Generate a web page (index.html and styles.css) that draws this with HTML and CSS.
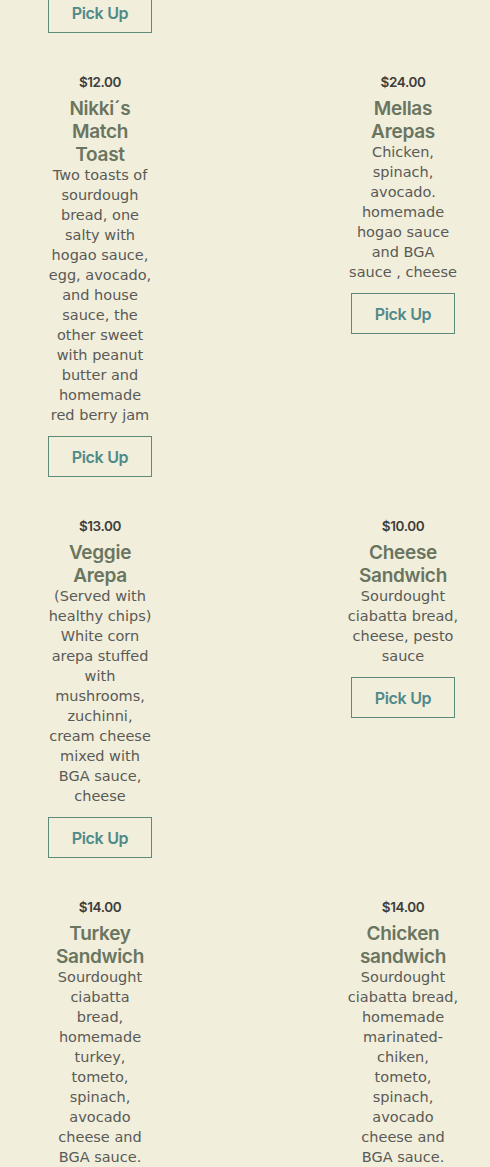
FILE: index.html
```html
<!doctype html>
<html lang="en">

<head>
  <meta charset="utf-8">
  <meta name="viewport" content="width=device-width, initial-scale=1">
  <link rel="stylesheet" href="styles.css">
  <title>Menu</title>
</head>

<body>
  <div class="menu">
    <div class="item item-tail">
      <button class="pickup">Pick Up</button>
    </div>
    <div class="item"></div>

    <div class="item">
      <div class="price">$12.00</div>
      <div class="name">Nikki´s Match Toast</div>
      <div class="desc">Two toasts of sourdough bread, one salty with hogao sauce, egg, avocado, and house sauce, the other sweet with peanut butter and homemade red berry jam</div>
      <button class="pickup">Pick Up</button>
    </div>
    <div class="item">
      <div class="price">$24.00</div>
      <div class="name">Mellas Arepas</div>
      <div class="desc">Chicken, spinach, avocado. homemade hogao sauce and BGA sauce&nbsp;, cheese</div>
      <button class="pickup">Pick Up</button>
    </div>

    <div class="item">
      <div class="price">$13.00</div>
      <div class="name">Veggie Arepa</div>
      <div class="desc">(Served with healthy chips) White corn arepa stuffed with mushrooms, zuchinni, cream cheese mixed with BGA sauce, cheese</div>
      <button class="pickup">Pick Up</button>
    </div>
    <div class="item">
      <div class="price">$10.00</div>
      <div class="name">Cheese Sandwich</div>
      <div class="desc">Sourdought ciabatta bread, cheese, pesto sauce</div>
      <button class="pickup">Pick Up</button>
    </div>

    <div class="item">
      <div class="price">$14.00</div>
      <div class="name">Turkey Sandwich</div>
      <div class="desc">Sourdought ciabatta bread, homemade turkey, tometo, spinach, avocado cheese and BGA sauce.</div>
      <button class="pickup">Pick Up</button>
    </div>
    <div class="item">
      <div class="price">$14.00</div>
      <div class="name">Chicken sandwich</div>
      <div class="desc">Sourdought ciabatta bread, homemade marinated-chiken, tometo, spinach, avocado cheese and BGA sauce.</div>
      <button class="pickup">Pick Up</button>
    </div>
  </div>
</body>

</html>
```

FILE: styles.css
```css
body {
  margin: 0;
  background-color: #f1eedc;
  font-family: "DejaVu Sans", sans-serif;
}

.menu {
  display: grid;
  grid-template-columns: 108px 112px;
  column-gap: 193px;
  row-gap: 39px;
  align-items: start;
  padding-left: 46px;
  margin-top: -8px;
}

.item {
  display: flex;
  flex-direction: column;
  align-items: center;
  text-align: center;
}

.price {
  font-family: Inter, sans-serif;
  font-weight: 600;
  font-size: 13.5px;
  line-height: 20px;
  letter-spacing: -0.4px;
  color: #3d3d3b;
}

.name {
  font-family: Inter, sans-serif;
  font-weight: 600;
  font-size: 19px;
  line-height: 23px;
  letter-spacing: -0.3px;
  color: #6a7560;
  margin-top: 5px;
  margin-bottom: -1px;
}

.desc {
  font-size: 14.5px;
  line-height: 20px;
  color: #5a5a56;
}

.pickup {
  width: 104px;
  height: 41px;
  margin-top: 11px;
  background: none;
  border: 1px solid #5e8a7a;
  border-radius: 0;
  font-family: Inter, sans-serif;
  font-weight: 600;
  font-size: 16px;
  letter-spacing: -0.3px;
  color: #4f8a88;
  padding: 0;
}

.item-tail .pickup {
  margin-top: 0;
}
```
